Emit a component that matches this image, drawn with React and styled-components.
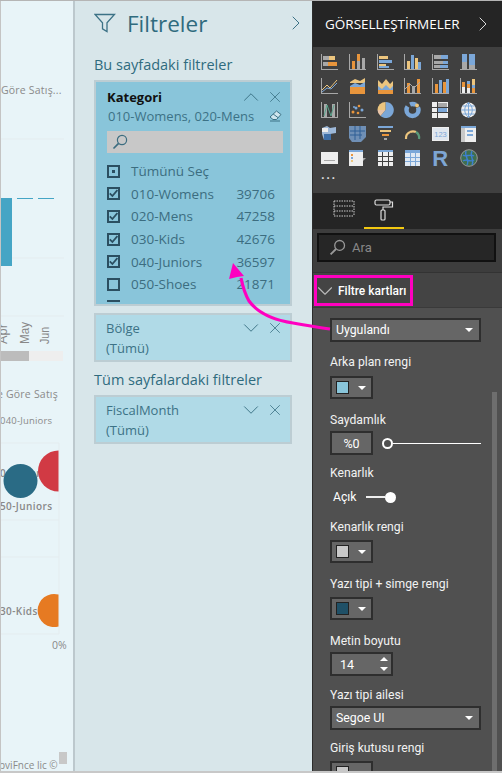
import styled, { createGlobalStyle } from 'styled-components';
import { ChevronUp, ChevronDown, ChevronRight, X } from 'lucide-react';

const GlobalStyle = createGlobalStyle`
html, body { margin: 0; padding: 0; background: #fff; }
* { box-sizing: border-box; }
body { font-family: "Open Sans", "Noto Sans", "Liberation Sans", sans-serif; }
`

const Page = styled.div`
position: relative;
display: flex;
width: 502px;
height: 773px;
overflow: hidden;
border-top: 1px solid #b5b5b5;
border-bottom: 2px solid #c8c8c8;
`
/* left: the report canvas cut off by the pane */
const Report = styled.div`
display: flex;
flex-direction: column;
width: 75px;
flex-shrink: 0;
background: #e8f4f8;
border-left: 1px solid #c4c4c4;
border-right: 2px solid #bcc8cd;
color: #8a8a8a;
overflow: hidden;
`
const ReportTitle = styled.div`
font-size: ${p => p.$size}px;
line-height: 16px;
white-space: nowrap;
margin-top: ${p => p.$top}px;
margin-left: ${p => p.$left}px;
letter-spacing: 0.2px;
flex-shrink: 0;
`
const Chart = styled.svg`
display: block;
flex-shrink: 0;
`
const ChartBar = styled.div`
width: 62px;
height: 10px;
background: #eeeeee;
flex-shrink: 0;
`
const ChartThumb = styled.div`
width: 28px;
height: 100%;
background: #bcbcbc;
`
const Copyright = styled.div`
display: flex;
align-items: flex-start;
margin-top: auto;
height: 19px;
font-size: 10px;
white-space: nowrap;
`
const CopyrightText = styled.span`
padding-top: 6px;
margin-left: -2px;
`
const CopyrightBox = styled.span`
width: 8px;
height: 12px;
background: #c8c8c8;
margin-left: 1px;
flex-shrink: 0;
`

/* middle: filter pane */
const FilterPane = styled.div`
width: 237px;
flex-shrink: 0;
background: #d8e6ea;
padding: 0 4px 0 19px;
color: #2f6b7e;
`
const PaneHead = styled.div`
display: flex;
align-items: center;
height: 44px;
`
const PaneTitle = styled.div`
font-size: 22.5px;
margin-left: 11px;
flex: 1;
`
const SectionTitle = styled.div`
font-size: 14.5px;
line-height: 20px;
margin-top: ${p => p.$top}px;
margin-bottom: ${p => p.$bottom}px;
`
const Card = styled.div`
width: 198px;
border: 2px solid #bccdd3;
background: ${p => (p.$open ? '#89c5da' : '#b0dae7')};
padding: ${p => (p.$open ? '5px 6px 0 11px' : '3px 6px 0 10px')};
height: ${p => p.$height}px;
margin-top: ${p => p.$top || 0}px;
`
const CardHead = styled.div`
display: flex;
align-items: center;
height: 20px;
color: #3d7386;
`
const CardName = styled.div`
flex: 1;
font-size: 13px;
font-weight: ${p => (p.$open ? 700 : 400)};
color: ${p => (p.$open ? '#111' : '#3c7286')};
`
const CardSub = styled.div`
display: flex;
align-items: center;
justify-content: space-between;
height: 18px;
margin-top: ${p => p.$top || 0}px;
font-size: 13px;
white-space: nowrap;
color: #3c7286;
padding-left: ${p => p.$pad || 0}px;
padding-right: ${p => p.$right || 0}px;
`
const CardIcons = styled.div`
display: flex;
align-items: center;
gap: 2px;
`
const SearchBox = styled.div`
display: flex;
align-items: center;
height: 22px;
width: 176px;
margin: 6px 0 7px 0;
padding-left: 5px;
background: #c8c8c8;
`
const ValueList = styled.div`
height: 142px;
overflow: hidden;
`
const ValueRow = styled.div`
display: flex;
align-items: center;
height: 22.6px;
padding-right: 9px;
font-size: 13.5px;
color: #3c6d80;
`
const Check = styled.span`
display: flex;
align-items: center;
justify-content: center;
width: 13px;
height: 13px;
border: 2px solid #2b4f61;
margin: 0 11px 0 0;
flex-shrink: 0;
`
const CheckDot = styled.span`
width: 3px;
height: 3px;
background: #2b4f61;
`
const ValueName = styled.span`
flex: 1;
`

/* right: visualizations pane */
const VizPane = styled.div`
position: relative;
flex: 1;
background: #505050;
color: #fff;
border-left: 1px solid #2c2c2c;
overflow: hidden;
font-family: Roboto, "Open Sans", sans-serif;
`
const VizHead = styled.div`
display: flex;
align-items: center;
height: 46px;
padding: 0 7px 0 12px;
background: #252525;
font-family: "Open Sans", sans-serif;
font-size: 13.5px;
`
const VizHeadText = styled.div`
flex: 1;
white-space: nowrap;
`
const Gallery = styled.div`
display: grid;
grid-template-columns: repeat(6, 27.8px);
grid-auto-rows: 24px;
align-content: start;
height: 146px;
padding: 6px 0 0 8px;
background: #404040;
`
const DotsIcon = styled.div`
font-size: 13px;
line-height: 10px;
letter-spacing: 1.5px;
font-weight: 700;
color: #ddd;
margin-top: -3px;
`
const RGlyph = styled.div`
font-family: "Liberation Sans", sans-serif;
font-weight: 700;
font-size: 22px;
line-height: 20px;
color: #7ea6d4;
`
const Tabs = styled.div`
display: flex;
align-items: flex-start;
height: 36px;
padding-left: 11px;
background: #252525;
`
const Tab = styled.div`
display: flex;
justify-content: center;
width: 40px;
height: 36px;
padding-top: 6px;
border-bottom: ${p => (p.$active ? '2px solid #f2c811' : '2px solid transparent')};
`
const SearchWrap = styled.div`
height: 44px;
padding: 4px 6px 0 4px;
background: #3d3d3d;
border-bottom: 1px solid #333;
`
const FieldSearch = styled.div`
display: flex;
align-items: center;
gap: 6px;
height: 29px;
padding-left: 10px;
background: #262626;
border: 2px solid #111;
color: #888;
font-size: 13px;
`
const GroupHead = styled.div`
height: 35px;
padding: 2px 0 2px 1px;
background: #444;
border-bottom: 1px solid #3a3a3a;
`
const GroupTitle = styled.div`
display: inline-flex;
align-items: center;
width: 99px;
height: 31px;
border: 3px solid #ff00c0;
font-size: 12px;
font-weight: 500;
white-space: nowrap;
svg { flex-shrink: 0; margin-left: -5px; }
`
const Form = styled.div`
padding: 10px 0 0 17px;
`
const Label = styled.div`
height: 18px;
line-height: 18px;
font-size: 12.2px;
color: #f2f2f2;
margin-top: ${p => p.$top || 0}px;
margin-bottom: ${p => p.$bottom || 0}px;
white-space: nowrap;
`
const Select = styled.div`
display: flex;
align-items: center;
justify-content: space-between;
width: 151px;
height: 24px;
padding: 0 6px 0 4px;
background: #666;
border: 2px solid #2e2e2e;
font-size: 12.3px;
`
const Caret = styled.span`
width: 0;
height: 0;
border-left: 4px solid transparent;
border-right: 4px solid transparent;
border-top: 4px solid #fff;
`
const ColorBtn = styled.div`
display: flex;
align-items: center;
gap: 9px;
width: 43px;
height: 23px;
padding-left: 4px;
background: #666;
border: 2px solid #2e2e2e;
`
const Swatch = styled.span`
width: 13px;
height: 13px;
border: 1px solid #222;
background: ${p => p.$color};
`
const SliderRow = styled.div`
display: flex;
align-items: center;
`
const NumInput = styled.div`
display: flex;
align-items: center;
justify-content: center;
width: 43px;
height: 24px;
background: #666;
border: 2px solid #2e2e2e;
font-size: 12.5px;
`
const Slider = styled.div`
display: flex;
align-items: center;
width: 99px;
margin-left: 9px;
`
const SliderKnob = styled.span`
width: 11px;
height: 11px;
border-radius: 50%;
border: 2px solid #fff;
background: #505050;
flex-shrink: 0;
`
const SliderLine = styled.span`
flex: 1;
height: 1px;
background: #fff;
`
const ToggleRow = styled.div`
display: flex;
align-items: center;
height: 20px;
padding-left: 3px;
font-size: 12.2px;
`
const Toggle = styled.div`
display: flex;
align-items: center;
width: 30px;
margin-left: 9px;
`
const ToggleLine = styled.span`
flex: 1;
height: 2px;
background: #eee;
`
const ToggleKnob = styled.span`
width: 11px;
height: 11px;
border-radius: 50%;
background: #fff;
`
const Spinner = styled.div`
display: flex;
align-items: center;
justify-content: space-between;
width: 63px;
height: 24px;
padding: 0 3px 0 8px;
background: #666;
border: 2px solid #2e2e2e;
font-size: 12.5px;
`
const SpinArrows = styled.div`
display: flex;
flex-direction: column;
gap: 6px;
`
const CaretUp = styled(Caret)`
display: block;
border-top: 0;
border-bottom: 4px solid #fff;
`
const CaretDown = styled(Caret)`
display: block;
`
const Scroll = styled.div`
position: absolute;
top: 391px;
right: 5px;
bottom: 0;
width: 5px;
background: #6e6e6e;
`
const Arrow = styled.svg`
position: absolute;
left: 225px;
top: 255px;
pointer-events: none;
`

const Funnel = () => (
  <svg width="22" height="20" viewBox="0 0 22 20" fill="none" stroke="#3c7286" strokeWidth="1.3">
    <path d="M1 1.5h19.5l-7.5 8.3v8.7l-4.5-2.6v-6.1z" />
  </svg>
)
const Lens = ({ color, size = 16 }) => (
  <svg width={size} height={size} viewBox="0 0 16 16" fill="none" stroke={color} strokeWidth="1.2">
    <circle cx="10" cy="6" r="4.6" />
    <path d="M6.6 9.4 1.5 14.5" strokeWidth="1.7" />
  </svg>
)
const Eraser = () => (
  <svg width="13" height="12" viewBox="0 0 13 12" fill="#cfe6ee" stroke="#3c7286" strokeWidth="1">
    <path d="M7.5 1 12 4.5 7.5 9.5H4L1 7z" />
    <path d="M4.2 4 9 7.6M1 11h10" fill="none" />
  </svg>
)
const Tick = () => (
  <svg width="9" height="9" viewBox="0 0 9 9" fill="none" stroke="#2b4f61" strokeWidth="1.8">
    <path d="M.8 4.3 3.4 7 8.4 1" />
  </svg>
)
const FieldsTab = () => (
  <svg width="22" height="22" viewBox="0 0 22 22" fill="none" stroke="#ccc" strokeWidth="1" strokeDasharray="1.5 1">
    <path d="M1 2h20M1 7h20M1 12h20M1 17h20M1 2v15M21 2v15" />
  </svg>
)
const FormatTab = () => (
  <svg width="20" height="22" viewBox="0 0 20 22" fill="none" stroke="#ddd" strokeWidth="1.2">
    <rect x="1" y="1" width="15" height="5" rx="1.5" />
    <path d="M16 3h2.5v5H9v3" />
    <rect x="7" y="11" width="4" height="10" rx="1" />
  </svg>
)

const G = '#a8a8a8'
const O = '#e8953c'
const B = '#7ba7d8'
const T = '#ecc57e'
const W = '#eeeeee'
const axes = [[0, 1, 1, 16, G], [0, 16, 17, 1, G]]
const bars = (list) => list.map(([x, y, h, c]) => [x, y, 3, h, c])

// every gallery icon is a small list of [x, y, w, h, colour] plus optional paths
const galleryIcons = [
  { r: [...axes, [2, 3, 6, 4, G], [8, 3, 6, 4, T], [2, 9, 5, 4, G], [7, 9, 9, 4, O]] },
  { r: [...axes, ...bars([[3, 8, 8, O], [8, 1, 7, O], [8, 8, 8, G], [13, 5, 11, G]])] },
  { r: [...axes, [2, 3, 9, 3, T], [2, 7, 13, 3, B], [2, 11, 7, 2, T], [2, 13, 10, 2, B]] },
  { r: [...axes, ...bars([[3, 8, 8, T], [7, 2, 14, B], [11, 5, 11, T], [14, 9, 7, B]])] },
  { r: [...axes, [2, 2, 7, 4, G], [9, 2, 7, 4, B], [2, 8, 9, 3, G], [11, 8, 5, 3, B], [2, 12, 6, 3, G], [8, 12, 8, 3, B]] },
  { r: [[0, 16, 17, 1, G], [2, 1, 5, 8, B], [2, 9, 5, 7, G], [9, 1, 6, 11, B], [9, 12, 6, 4, G]] },
  { r: [...axes], p: [['M1 13 6 8l3 3 7-8', T], ['M1 15 6 11l4 1 6-6', B]] },
  { f: [['M1 5 6 2l5 2 5-3v5H1z', T], ['M1 9l5-3 5 2 5-3v5H1z', B], ['M1 10h15v7H1z', O]] },
  { f: [['M1 3 5 7 9 2l4 5 3-3v13H1z', T], ['M1 9l4 3 4-4 4 4 3-3v8H1z', B], ['M1 13h15v4H1z', O]] },
  { r: [...axes, ...bars([[3, 6, 10, O], [8, 9, 7, G], [13, 2, 14, O]])], p: [['M1 12 6 7l4 4 6-6', G]] },
  { r: [...axes, ...bars([[3, 7, 9, O], [7, 3, 13, B], [11, 5, 11, O], [14, 2, 14, B]])] },
  { r: [...axes, ...bars([[2, 5, 5, O], [2, 10, 6, W], [7, 4, 3, B], [7, 7, 4, O], [7, 11, 5, W], [12, 2, 6, T], [12, 8, 3, B], [12, 11, 5, O]])] },
  { r: [[0, 1, 1, 16, G], [16, 1, 1, 16, G], [0, 16, 17, 1, G], [3, 3, 3, 13, G], [11, 3, 3, 13, G]], p: [['M3 15 6 4l4 11 3-11', '#5aa48c']] },
  { r: [...axes], c: [[4, 11, 1.5], [7, 7, 1.5], [10, 5, 1.3], [13, 9, 1.5], [9, 12, 1.3], [5, 6, 1]] },
  { f: [['M8.5 9V1a8 8 0 1 1-5 14z', B], ['M8.5 9l-5 6A8 8 0 0 1 .5 9z', '#e8c4a8'], ['M8.5 9h-8a8 8 0 0 1 8-8z', T]] },
  { donut: true },
  { r: [[0, 1, 16, 16, W], [5, 1, 1, 16, '#404040'], [0, 6, 16, 1, '#404040'], [0, 11, 16, 1, '#404040'], [6, 2, 9, 4, G], [6, 7, 9, 4, B]] },
  { globe: true },
  { f: [['M1 3l5-2 3 2 6-1v6l-6 1-2 6H3L1 9z', '#9db8d8']], r: [[3, 9, 7, 6, '#3e6fa8'], [1, 3, 6, 4, W]] },
  { f: [['M0 1h17v11l-5 5H3l-3-4z', '#6f8fb5']], p: [['M1 6h15M1 10h12M6 1v14M11 1v13', '#2f5f95']] },
  { r: [[1, 1, 15, 2, B], [3, 5, 11, 2, T], [5, 9, 7, 2, O], [7, 13, 3, 2, G]] },
  { p: [['M2 14a7 7 0 0 1 4-7', T], ['M6 7a7 7 0 0 1 6 0', T], ['M12 7a7 7 0 0 1 3 7', '#5a9a7a']], thick: true },
  { r: [[0, 2, 17, 14, W], [1, 3, 15, 12, '#dfe6ee']], t: '123' },
  { r: [[1, 1, 15, 16, W], [1, 1, 15, 2, B], [1, 3, 4, 14, '#c8c8c8'], [7, 5, 6, 2, B], [7, 9, 6, 2, B]] },
  { r: [[0, 3, 17, 12, W], [3, 11, 11, 1, G]], f: [['M4 10l3-3 2 3z', '#5aa48c'], ['M10 6h4l-2 3z', '#d8504a']] },
  { r: [[0, 1, 14, 16, W], [0, 1, 14, 2, B], [2, 5, 2, 2, O], [2, 8, 2, 2, B], [2, 11, 2, 2, T]], f: [['M7 9h10l-4 4v4l-2-1v-3z', G]] },
  { r: [[1, 1, 15, 16, W], [1, 1, 15, 2, B], [5, 3, 1, 14, '#404040'], [11, 3, 1, 14, '#404040'], [1, 7, 15, 1, '#404040'], [1, 12, 15, 1, '#404040']] },
  { r: [[1, 1, 15, 16, '#dfe8f2'], [1, 1, 15, 3, B], [6, 4, 1, 13, B], [11, 4, 1, 13, B], [1, 8, 15, 1, B], [1, 12, 15, 1, B]] },
  { text: 'R' },
  { earth: true },
  { dots: true },
]

const GalleryIcon = ({ icon }) => {
  if (icon.text) return <RGlyph>{icon.text}</RGlyph>
  if (icon.dots) return <DotsIcon>...</DotsIcon>
  return (
    <svg width="18" height="18" viewBox="0 0 18 18">
      {icon.f && icon.f.map(([d, c], i) => <path key={i} d={d} fill={c} />)}
      {icon.r && icon.r.map(([x, y, w, h, c], i) => <rect key={i} x={x} y={y} width={w} height={h} fill={c} />)}
      {icon.p && icon.p.map(([d, c], i) => <path key={i} d={d} fill="none" stroke={c} strokeWidth={icon.thick ? 2.2 : 1} />)}
      {icon.c && icon.c.map(([x, y, r], i) => <circle key={i} cx={x} cy={y} r={r} fill={i % 2 ? B : O} />)}
      {icon.t && <text x="8.5" y="12" fontSize="7.5" textAnchor="middle" fill="#7ba7d8" fontFamily="Liberation Sans">{icon.t}</text>}
      {icon.donut && <>
        <circle cx="8.5" cy="9" r="6" fill="none" stroke={B} strokeWidth="4.5" strokeDasharray="22 3 6 3" />
        <circle cx="13" cy="4.5" r="2" fill={T} />
      </>}
      {icon.globe && <g fill="none">
        <circle cx="8.5" cy="9" r="7.5" fill={W} />
        <path d="M1 9h15M2.5 5h12M2.5 13h12M8.5 1.5v15M8.5 1.5c-5 4-5 11 0 15M8.5 1.5c5 4 5 11 0 15" stroke={B} strokeWidth="1" />
      </g>}
      {icon.earth && <g>
        <circle cx="9" cy="9" r="8.3" fill="#3f6f4f" stroke="#999" strokeWidth="1" />
        <path d="M3 6c3 3 7-2 11 1M3 12c4-3 7 2 11-1M6 2c-2 5 4 9 1 14M12 2c-3 5 3 9 0 14" fill="none" stroke="#3d7fd0" strokeWidth="1.4" />
      </g>}
    </svg>
  )
}

const values = [
  ['Tümünü Seç', '', 'some'],
  ['010-Womens', '39706', 'on'],
  ['020-Mens', '47258', 'on'],
  ['030-Kids', '42676', 'on'],
  ['040-Juniors', '36597', 'on'],
  ['050-Shoes', '21871', 'off'],
  ['', '', 'off'],
]

const App = () => (
  <>
    <GlobalStyle />
    <Page>
      <Report>
        <ReportTitle $size={10.5} $top={81} $left={0}>Göre Satış...</ReportTitle>
        <Chart width="72" height="253" viewBox="0 0 72 253">
          <g stroke="#e4ecef">
            <line x1="0" x2="63" y1="41" y2="41" />
            <line x1="0" x2="63" y1="160" y2="160" />
            <line x1="0" x2="63" y1="218" y2="218" />
          </g>
          <rect x="-1" y="100" width="12" height="68" fill="#45a5c5" />
          <rect x="16" y="100" width="16" height="1" fill="#45a5c5" />
          <rect x="37" y="100" width="16" height="1" fill="#45a5c5" />
          <g fill="#888" fontSize="12" fontFamily="Liberation Sans, sans-serif">
            <text transform="translate(6 246) rotate(-90)" textLength="20" lengthAdjust="spacingAndGlyphs">Apr</text>
            <text transform="translate(28 246) rotate(-90)" textLength="22" lengthAdjust="spacingAndGlyphs">May</text>
            <text transform="translate(48 246) rotate(-90)" textLength="17" lengthAdjust="spacingAndGlyphs">Jun</text>
          </g>
        </Chart>
        <ChartBar><ChartThumb /></ChartBar>
        <ReportTitle $size={10.5} $top={25} $left={-4}>e Göre Satış</ReportTitle>
        <ReportTitle $size={9.5} $top={11} $left={-1}>040-Juniors</ReportTitle>
        <Chart width="72" height="225" viewBox="0 0 72 225">
          <g stroke="#e4ecef">
            <line x1="0" x2="58" y1="14" y2="14" />
            <line x1="0" x2="58" y1="91" y2="91" />
            <line x1="0" x2="58" y1="128" y2="128" />
            <line x1="0" x2="58" y1="205" y2="205" />
            <line x1="58" x2="58" y1="14" y2="205" />
          </g>
          <g fill="#888" fontSize="10" fontWeight="600" fontFamily="Open Sans, sans-serif" letterSpacing="0.4">
            <text x="-1" y="48">0-Juniors</text>
            <text x="-1" y="81">50-Juniors</text>
            <text x="-1" y="186">30-Kids</text>
          </g>
          <circle cx="19.5" cy="52" r="17" fill="#2a6b85" />
          <path d="M57.5 21.5a20.5 20.5 0 0 0 0 41z" fill="#d13a44" />
          <path d="M57.5 165.6A16.5 16.5 0 1 0 57.5 197.4z" fill="#e67a22" />
          <text x="51" y="220" fill="#888" fontSize="10.5" fontFamily="Open Sans, sans-serif">0%</text>
        </Chart>
        <Copyright>
          <CopyrightText>bviFnce lic ©</CopyrightText>
          <CopyrightBox />
        </Copyright>
      </Report>

      <FilterPane>
        <PaneHead>
          <Funnel />
          <PaneTitle>Filtreler</PaneTitle>
          <ChevronRight size={24} strokeWidth={1} color="#3c7286" />
        </PaneHead>
        <SectionTitle $top={10} $bottom={5}>Bu sayfadaki filtreler</SectionTitle>
        <Card $open $height={226}>
          <CardHead>
            <CardName $open>Kategori</CardName>
            <CardIcons>
              <ChevronUp size={26} strokeWidth={0.9} />
              <X size={18} strokeWidth={1.1} />
            </CardIcons>
          </CardHead>
          <CardSub $pad={1} $right={2}>
            010-Womens, 020-Mens
            <Eraser />
          </CardSub>
          <SearchBox><Lens color="#3c6d80" /></SearchBox>
          <ValueList>
            {values.map(([name, count, state], i) => (
              <ValueRow key={i}>
                <Check>
                  {state === 'on' && <Tick />}
                  {state === 'some' && <CheckDot />}
                </Check>
                <ValueName>{name}</ValueName>
                {count}
              </ValueRow>
            ))}
          </ValueList>
        </Card>
        <Card $height={49} $top={7}>
          <CardHead>
            <CardName>Bölge</CardName>
            <CardIcons>
              <ChevronDown size={26} strokeWidth={0.9} />
              <X size={18} strokeWidth={1.1} />
            </CardIcons>
          </CardHead>
          <CardSub $top={1}>(Tümü)</CardSub>
        </Card>
        <SectionTitle $top={8} $bottom={5}>Tüm sayfalardaki filtreler</SectionTitle>
        <Card $height={49}>
          <CardHead>
            <CardName>FiscalMonth</CardName>
            <CardIcons>
              <ChevronDown size={26} strokeWidth={0.9} />
              <X size={18} strokeWidth={1.1} />
            </CardIcons>
          </CardHead>
          <CardSub $top={1}>(Tümü)</CardSub>
        </Card>
      </FilterPane>

      <VizPane>
        <VizHead>
          <VizHeadText>GÖRSELLEŞTİRMELER</VizHeadText>
          <ChevronRight size={24} strokeWidth={1} color="#ddd" />
        </VizHead>
        <Gallery>
          {galleryIcons.map((icon, i) => <GalleryIcon key={i} icon={icon} />)}
        </Gallery>
        <Tabs>
          <Tab><FieldsTab /></Tab>
          <Tab $active><FormatTab /></Tab>
        </Tabs>
        <SearchWrap>
          <FieldSearch><Lens color="#999" size={17} />Ara</FieldSearch>
        </SearchWrap>
        <GroupHead>
          <GroupTitle>
            <ChevronDown size={26} strokeWidth={1} color="#bbb" />
            Filtre kartları
          </GroupTitle>
        </GroupHead>
        <Form>
          <Select>Uygulandı<Caret /></Select>
          <Label $top={11} $bottom={5}>Arka plan rengi</Label>
          <ColorBtn><Swatch $color="#89c5da" /><Caret /></ColorBtn>
          <Label $top={12} $bottom={2}>Saydamlık</Label>
          <SliderRow>
            <NumInput>%0</NumInput>
            <Slider><SliderKnob /><SliderLine /></Slider>
          </SliderRow>
          <Label $top={9} $bottom={5}>Kenarlık</Label>
          <ToggleRow>
            Açık
            <Toggle><ToggleLine /><ToggleKnob /></Toggle>
          </ToggleRow>
          <Label $top={11} $bottom={4}>Kenarlık rengi</Label>
          <ColorBtn><Swatch $color="#c8c8c8" /><Caret /></ColorBtn>
          <Label $top={12} $bottom={4}>Yazı tipi + simge rengi</Label>
          <ColorBtn><Swatch $color="#1f5067" /><Caret /></ColorBtn>
          <Label $top={12} $bottom={2}>Metin boyutu</Label>
          <Spinner>14<SpinArrows><CaretUp /><CaretDown /></SpinArrows></Spinner>
          <Label $top={10} $bottom={2}>Yazı tipi ailesi</Label>
          <Select>Segoe UI<Caret /></Select>
          <Label $top={9} $bottom={4}>Giriş kutusu rengi</Label>
          <ColorBtn><Swatch $color="#c8c8c8" /><Caret /></ColorBtn>
        </Form>
        <Scroll />
      </VizPane>

      <Arrow width="110" height="80" viewBox="0 0 110 80" fill="none">
        <path d="M105 73C90 71 80 69 68 67 55 65 35 60 24 45 20 38 18 32 16 22" stroke="#ff00c0" strokeWidth="3.2" />
        <path d="M8 7 4 23 12 21 19 20z" fill="#ff00c0" />
      </Arrow>
    </Page>
  </>
)

export default App
